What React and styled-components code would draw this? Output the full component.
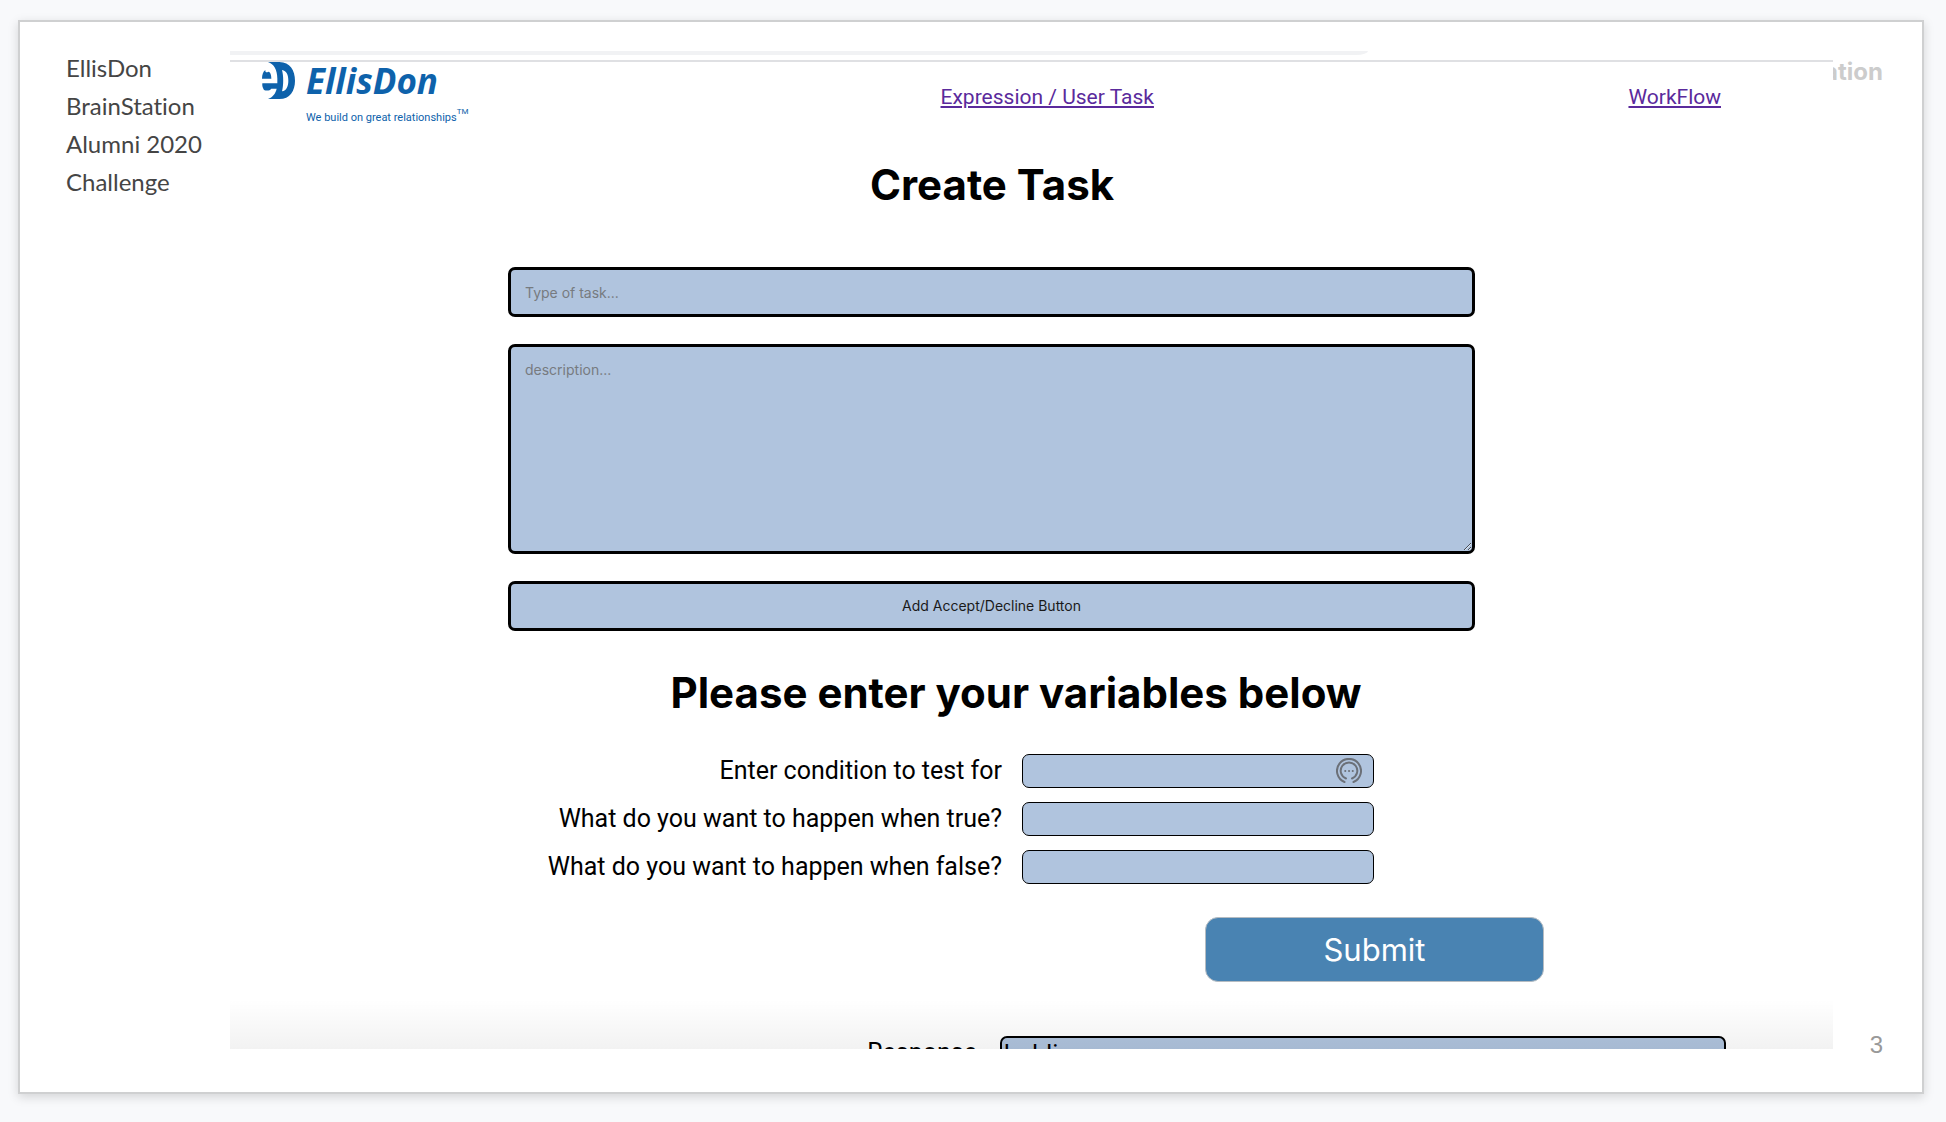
import React from "react";
import styled, { createGlobalStyle } from "styled-components";

const GlobalStyle = createGlobalStyle`
  *, *::before, *::after { box-sizing: border-box; }
  body { margin: 0; background: #f8f9fb; }
`;

const sans = `Inter, Roboto, "Liberation Sans", sans-serif`;
const narrowSans = `Roboto, "Liberation Sans", sans-serif`;

const Page = styled.div`
  display: flex;
  min-height: 100vh;
  padding: 20px 22px 28px 18px;
`;

const Slide = styled.article`
  flex: 1;
  display: grid;
  grid-template-columns: 210px minmax(0, 1fr) 89px;
  align-items: stretch;
  padding-top: 27px;
  background: #fff;
  border: 2px solid #cfd0d1;
  box-shadow: 0 3px 10px rgba(0, 0, 0, 0.15);
`;

const Caption = styled.p`
  margin: 0;
  padding: 0 0 0 46px;
  color: #454545;
  font: 400 24px/38px Lato, sans-serif;
  font-variant-ligatures: none;
`;

const Margin = styled.aside`
  display: flex;
  flex-direction: column;
  justify-content: space-between;
  padding: 7px 39px 33px 0;
`;

const Brand = styled.div`
  display: flex;
  justify-content: flex-end;
  overflow: hidden;
  color: #ccc;
  font: 700 24px/32px ${sans};
`;

const PageNumber = styled.span`
  align-self: flex-end;
  color: #999;
  font: 400 24px/28px "Liberation Sans", sans-serif;
`;

const Screen = styled.main`
  position: relative;
  align-self: start;
  display: flex;
  flex-direction: column;
  margin-top: 2px;
  overflow: hidden;
  background: #fff;
  color: #000;
  font-family: ${sans};

  &::after {
    content: "";
    position: absolute;
    inset: auto 0 0 0;
    height: 50px;
    background: linear-gradient(rgba(0, 0, 0, 0), rgba(0, 0, 0, 0.05));
    pointer-events: none;
  }
`;

const TabStrip = styled.div`
  width: 71%;
  height: 4px;
  background: #f1f2f4;
  border-bottom-right-radius: 12px 4px;
`;

const Nav = styled.nav`
  display: flex;
  align-items: center;
  justify-content: space-between;
  height: 71px;
  margin-top: 5px;
  padding: 0 112px 0 32px;
  border-top: 2px solid #dfe0e3;
`;

const Logo = styled.a`
  display: grid;
  grid-template-columns: 44px 160px;
  align-self: start;
  color: #0e62ab;
  text-decoration: none;
`;

const Mark = styled.svg`
  display: block;
  width: 33px;
  height: 37px;
`;

const Wordmark = styled.span`
  font: italic 700 35px/38px "Open Sans", sans-serif;
`;

const Tagline = styled.span`
  grid-column: 2;
  display: flex;
  margin-top: 8px;
  white-space: nowrap;
  font: 400 11px/20px ${narrowSans};
`;

const Trademark = styled.sup`
  font-size: 8px;
  line-height: 8px;
`;

const NavLink = styled.a`
  color: #5a2a9c;
  font: 400 21px/24px ${narrowSans};
  text-decoration: underline;
`;

const Title = styled.h1`
  margin: 30px 79px 58px 0;
  text-align: center;
  font-size: 42px;
  font-weight: 700;
  line-height: 48px;
`;

const Subtitle = styled.h2`
  margin: 38px 31px 37px 0;
  text-align: center;
  font-size: 42px;
  font-weight: 700;
  line-height: 48px;
`;

const Fields = styled.div`
  display: flex;
  flex-direction: column;
  gap: 27px;
  padding: 0 358px 0 278px;
`;

const boxed = `
  display: block;
  width: 100%;
  margin: 0;
  background: #b0c4de;
  border: 3px solid #000;
  border-radius: 7px;
  color: #1a1a1a;
  font: 400 14px/20px ${sans};
  &::placeholder { color: #777b80; opacity: 1; }
`;

const TextInput = styled.input`
  ${boxed}
  height: 50px;
  padding: 0 14px;
`;

const TextArea = styled.textarea`
  ${boxed}
  height: 210px;
  padding: 13px 14px;
`;

const WideButton = styled.button`
  ${boxed}
  height: 50px;
`;

const Conditions = styled.div`
  display: flex;
  flex-direction: column;
  gap: 14px;
  padding: 0 459px 0 278px;
`;

const Row = styled.div`
  display: grid;
  grid-template-columns: minmax(0, 1fr) 352px;
  column-gap: 20px;
  align-items: center;
`;

const Label = styled.label`
  text-align: right;
  font: 400 25px/34px ${narrowSans};
  white-space: nowrap;
`;

const SmallInput = styled.input`
  width: 100%;
  height: 34px;
  padding: 0 44px 0 4px;
  background: #b0c4de;
  border: 1px solid #000;
  border-radius: 7px;
  font: 400 25px/30px ${narrowSans};
`;

const InputWrap = styled.div`
  position: relative;
  display: flex;
`;

const FillIcon = styled.svg`
  position: absolute;
  top: 4px;
  right: 12px;
  width: 26px;
  height: 26px;
`;

const Submit = styled.button`
  align-self: flex-end;
  width: 339px;
  height: 65px;
  margin: 33px 289px 54px 0;
  background: #4983b2;
  border: 1px solid #b5bcc2;
  border-radius: 13px;
  color: #fff;
  font: 400 31px/40px ${sans};
`;

const Response = styled.div`
  display: grid;
  grid-template-columns: minmax(0, 1fr) 726px;
  column-gap: 23px;
  align-items: start;
  height: 13px;
  padding-right: 107px;
  overflow: hidden;
`;

const ResponseInput = styled(SmallInput)`
  height: 36px;
  border-width: 2px;
  padding: 0 2px;
`;

function Condition({ id, label, children }) {
  return (
    <Row>
      <Label htmlFor={id}>{label}</Label>
      <InputWrap>
        <SmallInput id={id} type="text" />
        {children}
      </InputWrap>
    </Row>
  );
}

export default function App() {
  return (
    <>
      <GlobalStyle />
      <Page>
        <Slide>
          <Caption>
            EllisDon
            <br />
            BrainStation
            <br />
            Alumni 2020
            <br />
            Challenge
          </Caption>
          <Screen>
            <TabStrip />
            <Nav>
              <Logo href="#home">
                <Mark viewBox="0 0 99 111" aria-hidden="true">
                  <g fill="#0e62ab">
                    <path d="M18 0H52C84 0 99 26 99 56S84 111 52 111H18C32 106 41 94 44 80H28C24 86 14 87 6 84C2 78 0 71 1 64H46V50C46 24 36 6 18 0Z" />
                    <path d="M0 50C0 38 4 28 10 24C9 31 14 33 19 29C26 30 28 40 28 50Z" />
                  </g>
                  <path fill="#fff" d="M60 24C74 26 79 40 79 56S74 86 60 88C65 70 65 42 60 24Z" />
                </Mark>
                <Wordmark>EllisDon</Wordmark>
                <Tagline>
                  We build on great relationships<Trademark>TM</Trademark>
                </Tagline>
              </Logo>
              <NavLink href="#task">Expression / User Task</NavLink>
              <NavLink href="#workflow">WorkFlow</NavLink>
            </Nav>
            <Title>Create Task</Title>
            <Fields>
              <TextInput type="text" aria-label="Type of task" placeholder="Type of task..." />
              <TextArea aria-label="description" placeholder="description..." />
              <WideButton type="button">Add Accept/Decline Button</WideButton>
            </Fields>
            <Subtitle>Please enter your variables below</Subtitle>
            <Conditions>
              <Condition id="condition" label="Enter condition to test for">
                <FillIcon viewBox="0 0 26 26" fill="none" stroke="#6b7078" strokeWidth="2" strokeLinecap="round" aria-hidden="true">
                  <path d="M8.500 24A12 12 0 1 1 17.500 24" />
                  <path d="M10 20.500A8.300 8.300 0 1 1 16 20.500" />
                  <path d="M9.200 13h.1M13 13h.1M16.700 13h.1" />
                </FillIcon>
              </Condition>
              <Condition id="when-true" label="What do you want to happen when true?" />
              <Condition id="when-false" label="What do you want to happen when false?" />
            </Conditions>
            <Submit type="submit">Submit</Submit>
            <Response>
              <Label htmlFor="response">Response</Label>
              <ResponseInput id="response" type="text" defaultValue="holding" />
            </Response>
          </Screen>
          <Margin>
            <Brand>BrainStation</Brand>
            <PageNumber>3</PageNumber>
          </Margin>
        </Slide>
      </Page>
    </>
  );
}
